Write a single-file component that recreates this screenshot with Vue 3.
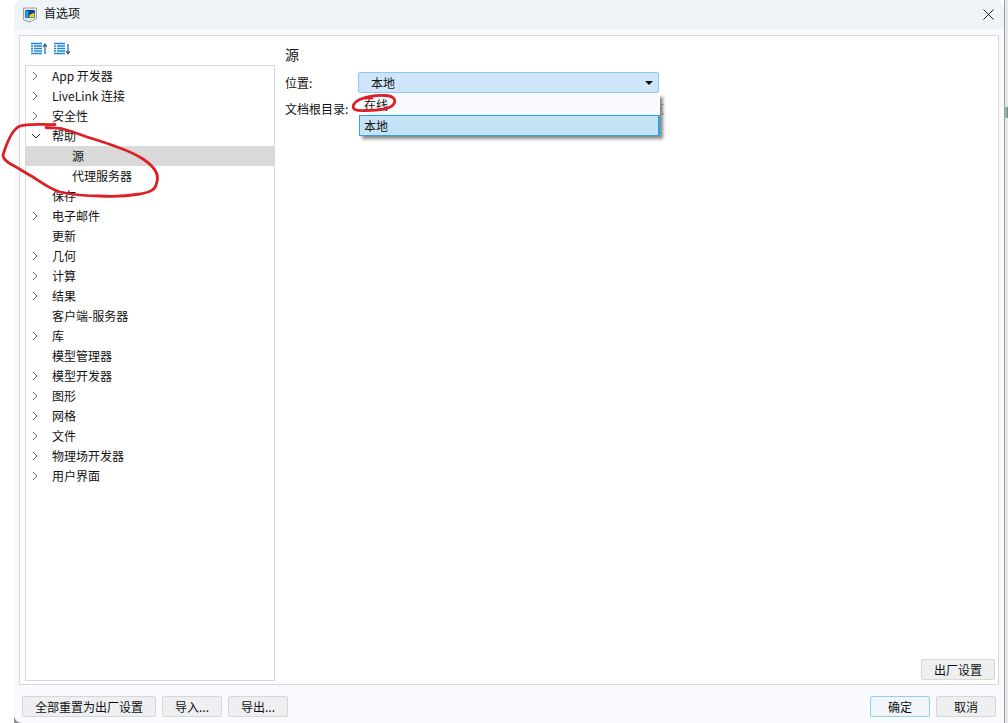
<script setup>
const rows = [
  { t: 'App 开发器', a: 'r' }, { t: 'LiveLink 连接', a: 'r' }, { t: '安全性', a: 'r' },
  { t: '帮助', a: 'd' }, { t: '源', c: 1, sel: 1 }, { t: '代理服务器', c: 1 },
  { t: '保存' }, { t: '电子邮件', a: 'r' }, { t: '更新' }, { t: '几何', a: 'r' },
  { t: '计算', a: 'r' }, { t: '结果', a: 'r' }, { t: '客户端-服务器' }, { t: '库', a: 'r' },
  { t: '模型管理器' }, { t: '模型开发器', a: 'r' }, { t: '图形', a: 'r' }, { t: '网格', a: 'r' },
  { t: '文件', a: 'r' }, { t: '物理场开发器', a: 'r' }, { t: '用户界面', a: 'r' }
]
</script>

<template>
  <div class="root">
    <div class="gutter"></div>
    <div class="shell">
      <div class="win">
        <div class="title">
          <svg class="appicon" width="16" height="16" viewBox="0 0 16 16">
            <path d="M1.500 1h13v10.500l-6.500 3.500-6.500-2z" fill="#e6e8ea" stroke="#9aa0a6" stroke-width="1" />
            <rect x="3" y="3" width="10" height="8" rx="1.500" fill="#123f8f" />
            <path d="M3.500 4h3v6.500h-3z" fill="#2aa3dc" />
            <path d="M7 10.500c0-2.500 2-4 5.500-4.500v4.500z" fill="#eed21e" />
          </svg>
          <span class="title-text">首选项</span>
          <svg class="close" width="11" height="11" viewBox="0 0 11 11">
            <path d="M0.500 0.500l10 10M10.500 0.500l-10 10" stroke="#1a1a1a" stroke-width="1" fill="none" />
          </svg>
        </div>
        <div class="panel">
          <div class="side">
            <div class="tools">
              <svg width="17" height="14" viewBox="0 0 17 14">
                <path d="M1 1.500h11M1 4h2M4 4h8M1 6.500h2M4 6.500h8M1 9h2M4 9h8M1 11.500h11" stroke="#1f86d8" stroke-width="1.300" fill="none" />
                <path d="M15 12V3M13 5l2-3 2 3" stroke="#1c5f99" stroke-width="1.200" fill="none" />
              </svg>
              <svg width="17" height="14" viewBox="0 0 17 14">
                <path d="M1 1.500h11M1 4h2M4 4h8M1 6.500h2M4 6.500h8M1 9h2M4 9h8M1 11.500h11" stroke="#1f86d8" stroke-width="1.300" fill="none" />
                <path d="M15 2v9M13 9l2 3 2-3" stroke="#1c5f99" stroke-width="1.200" fill="none" />
              </svg>
            </div>
            <div class="tree">
              <div v-for="r in rows" :key="r.t" class="row" :class="{ sel: r.sel, child: r.c }">
                <span class="arrow">
                  <svg v-if="r.a === 'r'" width="8" height="10" viewBox="0 0 8 10"><path d="M2 1l4 4-4 4" stroke="#666" fill="none" /></svg>
                  <svg v-if="r.a === 'd'" width="10" height="8" viewBox="0 0 10 8"><path d="M1 2l4 4 4-4" stroke="#222" fill="none" /></svg>
                </span>
                <span class="label">{{ r.t }}</span>
              </div>
            </div>
          </div>
          <div class="content">
            <div class="heading">源</div>
            <div class="form">
              <div class="field">
                <span class="flabel">位置:</span>
                <div class="combo">
                  <span>本地</span>
                  <span class="caret"></span>
                </div>
              </div>
              <div class="field second">
                <span class="flabel">文档根目录:</span>
                <span class="browse">浏览</span>
              </div>
              <div class="popup">
                <div class="opt">在线</div>
                <div class="opt cur">本地</div>
              </div>
            </div>
            <div class="content-foot">
              <button class="btn factory">出厂设置</button>
            </div>
          </div>
        </div>
        <div class="foot">
          <div class="group">
            <button class="btn wide">全部重置为出厂设置</button>
            <button class="btn std">导入...</button>
            <button class="btn std">导出...</button>
          </div>
          <div class="group">
            <button class="btn std primary">确定</button>
            <button class="btn std">取消</button>
          </div>
        </div>
      </div>
    </div>
    <div class="desk"><div class="chip"></div></div>
    <svg class="ink" width="1008" height="723" viewBox="0 0 1008 723">
      <path d="M55 124.500C44 125 30 123 20 126C12 129 7 142 3 155C3 159 6 161 9 163C18 168 26 173 33 177C42 183 50 189 60 192C74 195 86 196 100 196C114 197 128 196 140 194C150 192 155 190 156 185C158 180 158 176 156 172C153 166 149 163 143 159C135 154 126 150 117 147C107 143 97 140 87 137C79 134 71 131 63 129C60 128 52 128 46 127.500" fill="none" stroke="#dc2026" stroke-width="2.800" stroke-linecap="round" />
      <path d="M372 98C363 97 356 100 353.500 105C352 110 356 111 366 110.500C376 110.500 388 110 393 105C397 100 394 96 385 95.500C378 95 369 96 361 99" fill="none" stroke="#dc2026" stroke-width="2.800" stroke-linecap="round" />
    </svg>
  </div>
</template>

<style>
html, body { margin: 0; background: #fff; }
</style>

<style scoped>
.root {
  position: relative;
  width: 1008px;
  height: 723px;
  display: flex;
  overflow: hidden;
  font: 12px/20px "Noto Sans CJK SC", "Noto Sans", sans-serif;
  color: #111;
}
.gutter { width: 14px; flex: none; background: #fff; }
.shell { width: 990px; flex: none; background: linear-gradient(#fff 700px, #8e8e8e 700px); }
.win {
  height: 100%;
  background: #f9fafe;
  border-radius: 8px 8px 0 8px;
  display: flex;
  flex-direction: column;
}
.title {
  height: 30px;
  flex: none;
  box-sizing: border-box;
  background: #eff4f9;
  border-radius: 8px 8px 0 0;
  display: flex;
  align-items: center;
  padding: 0 10px 2px 8px;
}
.appicon { flex: none; margin-top: 2px; }
.title-text { margin: 0 0 2px 6px; flex: 1; }
.panel {
  margin: 5px 5px 0;
  height: 650px;
  flex: none;
  box-sizing: border-box;
  background: #fff;
  border: 1px solid #d6d8da;
  display: flex;
}
.side { width: 255px; flex: none; padding: 0 0 3px 5px; box-sizing: border-box; display: flex; flex-direction: column; }
.tools { height: 29px; flex: none; display: flex; gap: 6px; padding: 6px 0 0 5px; box-sizing: border-box; }
.tree {
  flex: 1;
  border: 1px solid #d6d8da;
  width: 250px;
  box-sizing: border-box;
  overflow: hidden;
}
.row { height: 20px; display: flex; align-items: center; line-height: 20px; white-space: nowrap; }
.row.sel { background: #d9d9d9; }
.arrow { width: 26px; padding-left: 5px; box-sizing: border-box; flex: none; display: flex; align-items: center; }
.row.child .label { margin-left: 20px; }
.content { flex: 1; display: flex; flex-direction: column; padding: 8px 3px 4px 10px; min-width: 0; }
.heading { font-size: 14px; line-height: 20px; }
.form { position: relative; flex: 1; padding-top: 8px; }
.field { display: flex; align-items: center; height: 21px; }
.second { margin-top: 5px; width: 379px; justify-content: space-between; }
.flabel { width: 73px; flex: none; }
.combo {
  width: 301px;
  height: 21px;
  box-sizing: border-box;
  background: #cfe5f9;
  border: 1px solid #8dc8f4;
  border-radius: 2px;
  display: flex;
  align-items: center;
  justify-content: space-between;
  padding: 0 5px 0 12px;
}
.caret { width: 0; height: 0; border: 4px solid transparent; border-top-color: #111; border-bottom: 0; }
.browse { width: 24px; text-align: left; }
.popup {
  position: absolute;
  left: 74px;
  top: 30px;
  width: 301px;
  height: 42px;
  background: #f9fafe;
  box-shadow: 3px 3px 3px #8b8b8b;
}
.opt { height: 21px; box-sizing: border-box; padding-left: 5px; line-height: 21px; }
.opt.cur { background: #c6e3f6; border: 2px solid #2ba5e3; border-width: 1px 2px 1px 1px; padding-left: 4px; line-height: 19px; }
.content-foot { display: flex; justify-content: flex-end; }
.btn {
  height: 21px;
  box-sizing: border-box;
  padding: 0;
  font: inherit;
  line-height: 18px;
  color: #111;
  background: #eeeff1;
  border: 1px solid #d6d7d9;
  border-radius: 2px;
}
.factory { width: 74px; }
.foot { flex: 1; display: flex; justify-content: space-between; align-items: flex-start; padding: 11px 8px 0; }
.group { display: flex; gap: 6px; }
.wide { width: 134px; }
.std { width: 60px; }
.primary { border-color: #93cdf3; background: #f1f5f9; }
.desk { flex: 1; background: #e8e8e8; border-left: 1px solid #9a9a9a; }
.chip { height: 11px; margin-top: 107px; background: linear-gradient(90deg, #d8c84a, #3f8fd8); }
.ink { position: absolute; left: 0; top: 0; pointer-events: none; }
</style>
